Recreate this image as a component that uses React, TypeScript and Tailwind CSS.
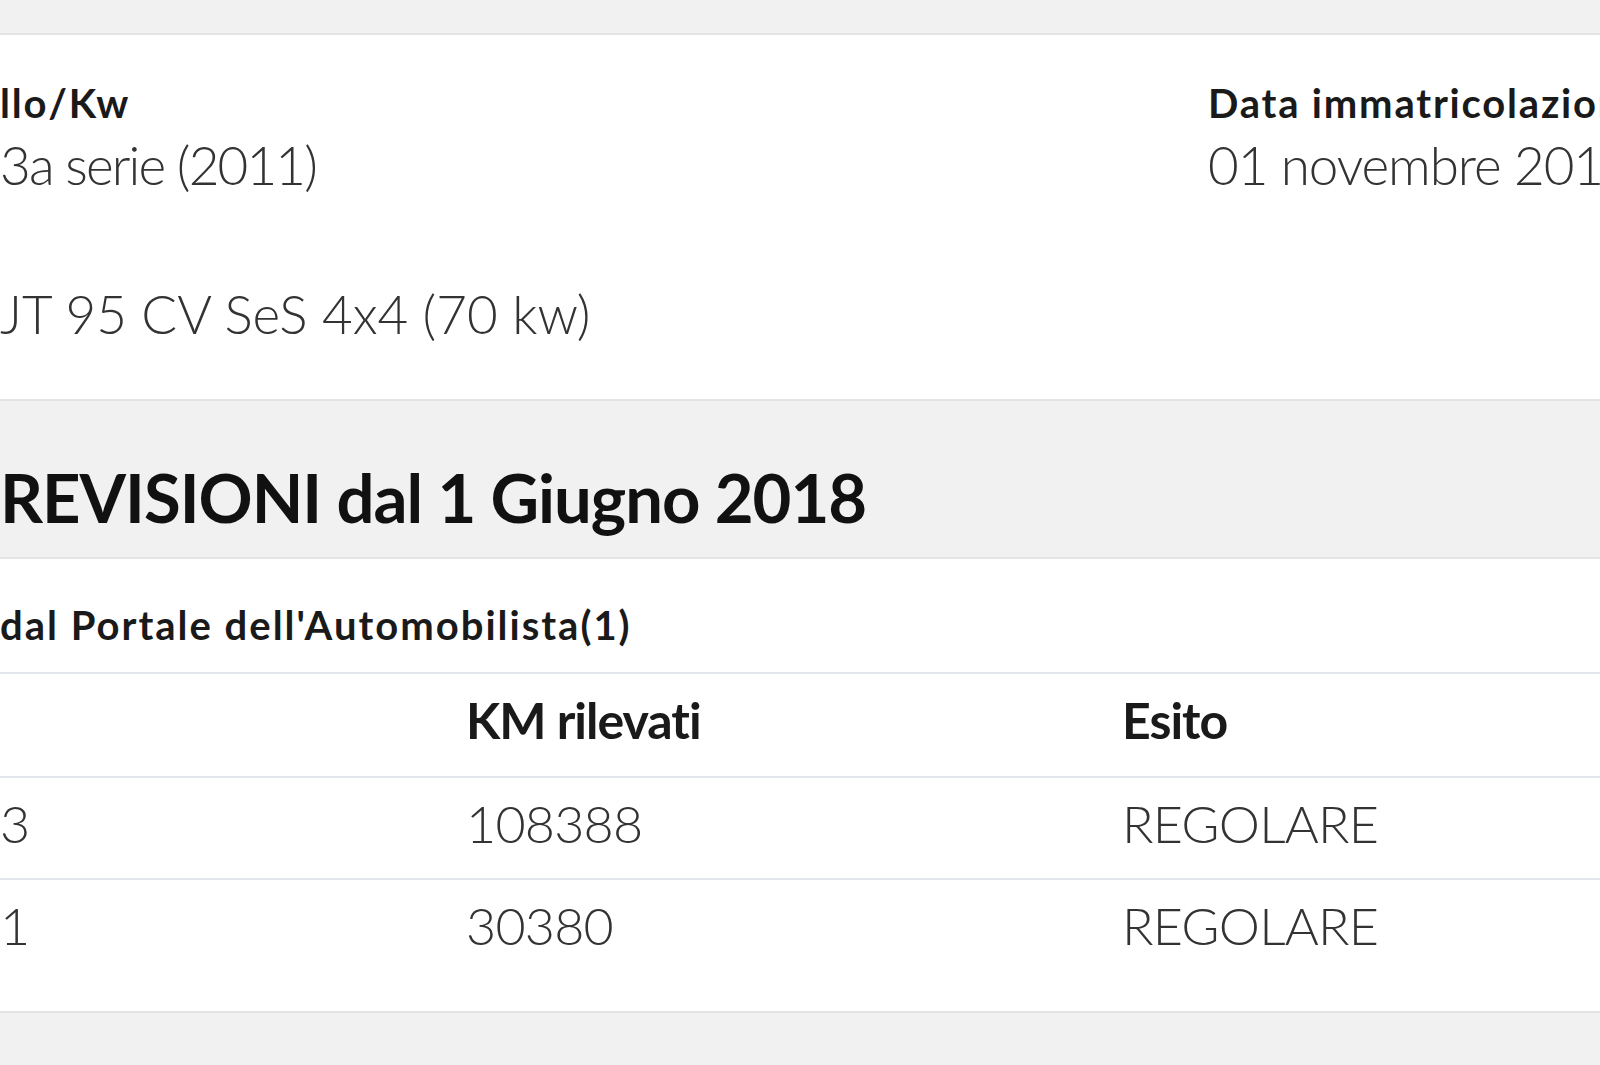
const font = "font-['Lato','Noto_Sans',sans-serif]";

const revisioni = [
  { data: "3", km: "108388", esito: "REGOLARE" },
  { data: "1", km: "30380", esito: "REGOLARE" },
];

export default function App() {
  return (
    <div className={`w-[1600px] min-h-[1065px] overflow-hidden bg-[#f1f1f1] ${font}`}>
      <div className="h-[33px]" />

      {/* dati veicolo */}
      <section className="h-[368px] border-y-2 border-[#e4e4e4] bg-white pt-[48px]">
        <div className="grid grid-cols-[1208px_1fr]">
          <div>
            <div className="text-[40px] leading-[40px] font-bold text-[#1a1a1a] tracking-[0.045em]">llo/Kw</div>
            <div className="mt-[15px] text-[53px] leading-[53px] font-light text-[#333] tracking-[-0.035em]">3a serie (2011)</div>
            <div className="mt-[96px] text-[53px] leading-[53px] font-light text-[#333] tracking-[0em]">JT 95 CV SeS 4x4 (70 kw)</div>
          </div>
          <div className="whitespace-nowrap">
            <div className="text-[40px] leading-[40px] font-bold text-[#1a1a1a] tracking-[0.045em]">Data immatricolazione</div>
            <div className="mt-[15px] text-[53px] leading-[53px] font-light text-[#333] tracking-[-0.02em]">01 novembre 2011</div>
          </div>
        </div>
      </section>

      {/* titolo revisioni */}
      <section className="h-[158px] border-b-2 border-[#e4e4e4] pt-[63px]">
        <h2 className="text-[67px] leading-[67px] font-bold text-[#111] whitespace-nowrap tracking-[-0.015em]">REVISIONI dal 1 Giugno 2018</h2>
      </section>

      <section className="bg-white border-b-2 border-[#e4e4e4] pb-[29px]">
        <div className="h-[115px] border-b-2 border-[#e3e6ea] pt-[46px]">
          <div className="text-[40px] leading-[40px] font-bold text-[#1a1a1a] whitespace-nowrap tracking-[0.05em]">dal Portale dell'Automobilista(1)</div>
        </div>
        <div className="grid grid-cols-[466px_656px_1fr] h-[104px] border-b-2 border-[#e3e6ea] pt-[21px] text-[50px] leading-[50px] font-bold text-[#1a1a1a] tracking-[-0.02em]">
          <div />
          <div>KM rilevati</div>
          <div>Esito</div>
        </div>
        {revisioni.map((r, i) => (
          <div
            key={i}
            className={`grid grid-cols-[466px_656px_1fr] h-[102px] pt-[19px] text-[52px] leading-[52px] font-light text-[#333] tracking-[-0.015em] ${i === 0 ? "border-b-2 border-[#e3e6ea]" : ""}`}
          >
            <div>{r.data}</div>
            <div>{r.km}</div>
            <div>{r.esito}</div>
          </div>
        ))}
      </section>
    </div>
  );
}
